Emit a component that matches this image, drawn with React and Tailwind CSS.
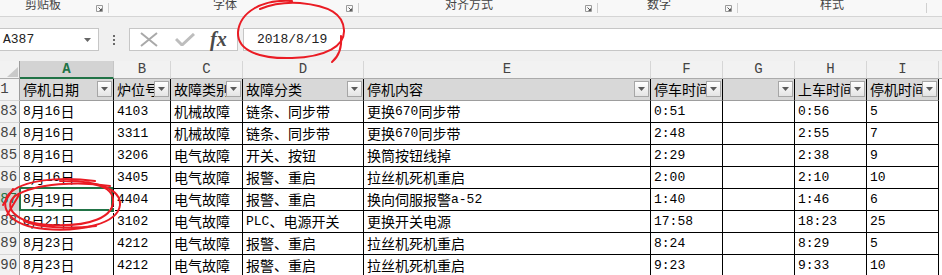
import React from 'react';

const GRID = 'grid grid-cols-[30px_94px_57px_72px_121px_287px_72px_72px_72px_72px_1fr]';

const groups = [
  { label: '剪贴板', w: 'w-[109px]', ml: 'ml-[25px]', launcher: true },
  { label: '字体', w: 'w-[250px]', ml: 'ml-[104px]', launcher: true },
  { label: '对齐方式', w: 'w-[239px]', ml: 'ml-[86px]', launcher: true },
  { label: '数字', w: 'w-[140px]', ml: 'ml-[49px]', launcher: true },
  { label: '样式', w: 'w-[189px]', ml: 'ml-[82px]', launcher: false },
];

const cols = ['A', 'B', 'C', 'D', 'E', 'F', 'G', 'H', 'I'];
const heads = ['停机日期', '炉位号', '故障类别', '故障分类', '停机内容', '停车时间', '', '上车时间', '停机时间'];

const rows = [
  [383, '8月16日', '4103', '机械故障', '链条、同步带', '更换670同步带', '0:51', '', '0:56', '5'],
  [384, '8月16日', '3311', '机械故障', '链条、同步带', '更换670同步带', '2:48', '', '2:55', '7'],
  [385, '8月16日', '3206', '电气故障', '开关、按钮', '换筒按钮线掉', '2:29', '', '2:38', '9'],
  [386, '8月16日', '3405', '电气故障', '报警、重启', '拉丝机死机重启', '2:00', '', '2:10', '10'],
  [387, '8月19日', '4404', '电气故障', '报警、重启', '换向伺服报警a-52', '1:40', '', '1:46', '6'],
  [388, '8月21日', '3102', '电气故障', 'PLC、电源开关', '更换开关电源', '17:58', '', '18:23', '25'],
  [389, '8月23日', '4212', '电气故障', '报警、重启', '拉丝机死机重启', '8:24', '', '8:29', '5'],
  [390, '8月23日', '4212', '电气故障', '报警、重启', '拉丝机死机重启', '9:23', '', '9:33', '10'],
];

// ascii runs get the mono font, like SimSun's half-width digits
const Txt = ({ s }) =>
  s.split(/([\x20-\x7e]+)/).filter(Boolean).map((part, i) =>
    /^[\x20-\x7e]+$/.test(part) ? (
      <span key={i} className="font-['Liberation_Mono',monospace] text-[13px]">{part}</span>
    ) : (
      <span key={i}>{part}</span>
    )
  );

const Launcher = () => (
  <svg width="7" height="7" viewBox="0 0 7 7" className="ml-auto mr-[5px] mt-[5px] shrink-0">
    <path d="M0.5 0.5h6v6h-6z" fill="none" stroke="#9a9a9a" />
    <path d="M2.5 2.5l3 3M5.5 3.5v2h-2" fill="none" stroke="#555" />
  </svg>
);

const FilterBtn = () => (
  <div className="absolute right-[1px] top-[2px] w-[15px] h-[16px] border border-[#a6a6a6] bg-linear-to-b from-white to-[#e4e4e4] flex items-center justify-center">
    <svg width="7" height="4" viewBox="0 0 7 4">
      <path d="M0 0h7L3.5 4z" fill="#5a5a5a" />
    </svg>
  </div>
);

export default function App() {
  return (
    <div className="relative w-[942px] h-[275px] overflow-hidden bg-white font-['Noto_Sans_CJK_SC',sans-serif]">
      {/* ribbon group labels */}
      <div className="flex h-[17px] bg-[#f8f8f8] border-b border-[#d5d5d5] overflow-hidden text-[12px] text-[#444]">
        {groups.map((g) => (
          <div key={g.label} className={`flex h-full shrink-0 ${g.w}`}>
            <span className={`${g.ml} -mt-[4px] leading-[16px] whitespace-nowrap`}>{g.label}</span>
            {g.launcher ? <Launcher /> : <div className="ml-auto" />}
            <div className="w-px h-[10px] mt-[3px] bg-[#d0d0d0] shrink-0" />
          </div>
        ))}
        <div className="flex-1" />
      </div>

      <div className="h-[11px] bg-[#f0f0f0]" />

      {/* formula bar */}
      <div className="flex h-[23px] bg-[#f0f0f0]">
        <div className="w-[99px] h-full bg-white border border-l-0 border-[#c6c6c6] flex items-center justify-between pl-[3px] pr-[7px]">
          <span className="font-['Liberation_Mono',monospace] text-[13px] text-[#222]">A387</span>
          <svg width="7" height="4" viewBox="0 0 7 4">
            <path d="M0 0h7L3.5 4z" fill="#666" />
          </svg>
        </div>
        <div className="w-[30px] flex flex-col items-center justify-center gap-[2px]">
          <div className="w-[2px] h-[2px] bg-[#6a6a6a]" />
          <div className="w-[2px] h-[2px] bg-[#6a6a6a]" />
          <div className="w-[2px] h-[2px] bg-[#6a6a6a]" />
        </div>
        <div className="w-[109px] h-full bg-white border border-[#c6c6c6] flex items-center pl-[10px]">
          <svg width="18" height="15" viewBox="0 0 18 15">
            <path d="M1 1L17 14M17 1L1 14" stroke="#a9a9a9" strokeWidth="2" />
          </svg>
          <svg width="20" height="13" viewBox="0 0 20 13" className="ml-[17px]">
            <path d="M1 6l6 6L19 1" fill="none" stroke="#bdbdbd" strokeWidth="3" />
          </svg>
          <span className="ml-[15px] font-['Liberation_Serif',serif] italic font-bold text-[20px] leading-none text-[#4a4a4a] -mt-[2px]">
            fx
          </span>
        </div>
        <div className="w-[5px]" />
        <div className="flex-1 h-full bg-white border border-r-0 border-[#c6c6c6] flex items-center pl-[13px]">
          <span className="font-['Liberation_Mono',monospace] text-[13px] text-[#222]">2018/8/19</span>
        </div>
      </div>

      <div className="h-[10px] bg-[#f0f0f0]" />

      {/* sheet */}
      <div className={`${GRID} -ml-[10px] w-[952px] text-[14px] text-black`}>
        {/* column letters */}
        <div className="h-[18px] bg-[#f2f2f2] border-r border-r-[#9b9b9b] border-b border-b-[#ababab] flex items-end justify-end pr-[1px] pb-[1px]">
          <svg width="11" height="10" viewBox="0 0 11 10">
            <path d="M11 0V10H0z" fill="#c9c9c9" />
          </svg>
        </div>
        {cols.map((c) =>
          c === 'A' ? (
            <div
              key={c}
              className="h-[18px] bg-[#d3d3d3] border-r border-r-[#c6c6c6] border-b-2 border-b-[#217346] flex items-center justify-center font-['Liberation_Mono',monospace] font-bold text-[#217346]"
            >
              {c}
            </div>
          ) : (
            <div
              key={c}
              className="h-[18px] bg-[#f2f2f2] border-r border-r-[#d6d6d6] border-b border-b-[#ababab] flex items-center justify-center font-['Liberation_Mono',monospace] text-[#444]"
            >
              {c}
            </div>
          )
        )}
        <div className="h-[18px] bg-[#f2f2f2] border-b border-b-[#ababab]" />

        {/* row 1: table headers */}
        <div className="h-[22px] bg-[#f2f2f2] border-r border-r-[#9b9b9b] border-b border-b-[#d6d6d6] flex items-center justify-center font-['Liberation_Mono',monospace] text-[#444]">
          1
        </div>
        {heads.map((h, i) => (
          <div key={i} className="relative h-[22px] bg-[#d8d8d8] border-r border-r-black border-b border-b-[#9d9d9d]">
            <div className="h-full flex items-center pl-[3px] overflow-hidden whitespace-nowrap">{h}</div>
            <FilterBtn />
          </div>
        ))}
        <div className="h-[22px] bg-white" />

        {/* data rows */}
        {rows.map(([n, ...cells]) => {
          const sel = n === 387;
          return (
            <React.Fragment key={n}>
              <div
                className={
                  sel
                    ? "h-[22px] bg-[#d3d3d3] border-r border-r-[#217346] border-b border-b-[#d6d6d6] flex items-center justify-center overflow-hidden whitespace-nowrap font-['Liberation_Mono',monospace] text-[#217346]"
                    : "h-[22px] bg-[#f2f2f2] border-r border-r-[#9b9b9b] border-b border-b-[#d6d6d6] flex items-center justify-center overflow-hidden whitespace-nowrap font-['Liberation_Mono',monospace] text-[#444]"
                }
              >
                {n}
              </div>
              {cells.map((v, i) => (
                <div key={i} className="relative h-[22px] border-r border-r-black border-b border-b-black">
                  <div className="h-full flex items-center pl-[3px] overflow-hidden whitespace-nowrap">
                    <Txt s={v} />
                  </div>
                  {sel && i === 0 && (
                    <div className="absolute -left-[1px] -top-[2px] w-[94px] h-[24px] border-2 border-[#217346] z-10">
                      <div className="absolute -right-[4px] -bottom-[4px] w-[6px] h-[6px] bg-[#217346] border border-white" />
                    </div>
                  )}
                </div>
              ))}
              <div className="h-[22px] bg-white" />
            </React.Fragment>
          );
        })}
      </div>

      {/* hand-drawn red marks over the screenshot */}
      <svg className="absolute inset-0 z-20 pointer-events-none" width="942" height="275" viewBox="0 0 942 275">
        <g fill="none" stroke="#ea1c24" strokeWidth="2" strokeLinecap="round">
          <path d="M292 1C262 -1 240 12 238 32C237 50 258 59 292 58C326 57 345 46 344 30C343 14 330 6 300 3C285 2 272 4 260 9" />
          <path d="M341 36C342 47 339 56 332 62" />
          <path d="M95 181C60 176 22 180 9 194C-1 206 8 226 45 229C80 232 118 224 120 205C121 190 100 180 60 181" />
          <path d="M110 186C80 181 35 183 15 196C3 206 13 223 50 225C90 227 115 217 113 199C112 190 104 186 92 184" />
          <path d="M3 205L13 189M7 215L19 195M24 221C40 228 70 229 96 226" />
        </g>
      </svg>
    </div>
  );
}
